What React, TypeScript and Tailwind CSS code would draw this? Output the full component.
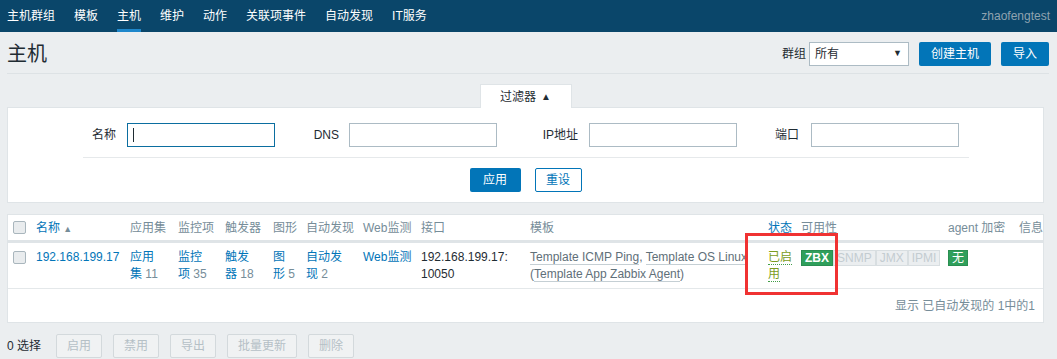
const navItems = ['主机群组', '模板', '主机', '维护', '动作', '关联项事件', '自动发现', 'IT服务'];

const cols =
  'grid grid-cols-[28px_94px_48px_47px_48px_33px_57px_58px_109px_238px_33px_147px_71px_24px]';

function Checkbox() {
  return <span className="block h-[13px] w-[13px] rounded-[2px] border border-[#a9b6bd] bg-[#e9ecee]" />;
}

export default function App() {
  return (
    <div className="relative min-h-screen bg-[#ebeef0] font-['Liberation_Sans','Noto_Sans_CJK_SC',sans-serif] text-[12px] text-[#1f2c33]">
      {/* top menu */}
      <nav className="flex h-[32px] bg-[#0a466a] pl-[7px] pr-[7px]">
        <ul className="flex gap-[19px]">
          {navItems.map((item) => (
            <li
              key={item}
              className={
                'flex items-center border-y-[3px] border-t-transparent text-white ' +
                (item === '主机' ? 'border-b-[#1e87cb]' : 'border-b-transparent')
              }
            >
              {item}
            </li>
          ))}
        </ul>
        <span className="ml-auto self-center text-[#8fa3b0]">zhaofengtest</span>
      </nav>

      {/* page header */}
      <div className="ml-[7px] mr-[8px] flex items-center justify-between border-b border-[#dde2e5] pb-[7px] pt-[10px]">
        <h1 className="text-[20px] leading-[24px] text-[#1f2c33]">主机</h1>
        <div className="flex items-center">
          <span className="mr-[3px]">群组</span>
          <div className="flex h-[24px] w-[100px] items-center border border-[#acbbc4] bg-white pl-[5px] pr-[6px]">
            <span>所有</span>
            <span className="ml-auto text-[9px]">▼</span>
          </div>
          <button className="ml-[10px] h-[24px] rounded-[2px] bg-[#0275b8] px-[12px] text-white">创建主机</button>
          <button className="ml-[10px] h-[24px] rounded-[2px] bg-[#0275b8] px-[12px] text-white">导入</button>
        </div>
      </div>

      {/* filter */}
      <div className="ml-[7px] mt-[10px] w-[1037px]">
        <div className="relative z-10 mx-auto -mb-px flex h-[24px] w-[92px] items-center justify-center border border-b-0 border-[#dfe4e7] bg-white">
          过滤器 <span className="ml-[5px] text-[10px]">▲</span>
        </div>
        <div className="border border-[#dfe4e7] bg-white pb-[10px] pt-[15px]">
          <div className="ml-[75px] flex w-[886px] items-center border-b border-[#e6e9eb] pb-[10px]">
            <span className="w-[33px] text-right">名称</span>
            <div className="ml-[11px] flex h-[24px] w-[148px] items-center border border-[#0b6ea0] pl-[5px]">
              <span className="h-[14px] w-px bg-[#1f2c33]" />
            </div>
            <span className="w-[64px] text-right">DNS</span>
            <div className="ml-[10px] h-[24px] w-[148px] border border-[#acbbc4]" />
            <span className="w-[81px] text-right">IP地址</span>
            <div className="ml-[11px] h-[24px] w-[148px] border border-[#acbbc4]" />
            <span className="w-[62px] text-right">端口</span>
            <div className="ml-[12px] h-[24px] w-[148px] border border-[#acbbc4]" />
          </div>
          <div className="flex justify-center gap-[14px] pt-[10px]">
            <button className="h-[24px] w-[51px] rounded-[2px] bg-[#0275b8] text-white">应用</button>
            <button className="h-[24px] w-[47px] rounded-[2px] border border-[#0275b8] bg-white text-[#0275b8]">重设</button>
          </div>
        </div>
      </div>

      {/* hosts table */}
      <div className="ml-[7px] mt-[11px] w-[1037px] border border-[#dfe4e7] bg-white">
        <div className={cols + ' h-[28px] items-center border-b-[3px] border-[#dfe4e7] text-[#768d99]'}>
          <div className="pl-[5px]">
            <Checkbox />
          </div>
          <div className="text-[#0275b8]">
            名称 <span className="text-[9px] text-[#768d99]">▲</span>
          </div>
          <div>应用集</div>
          <div>监控项</div>
          <div>触发器</div>
          <div>图形</div>
          <div>自动发现</div>
          <div>Web监测</div>
          <div>接口</div>
          <div>模板</div>
          <div className="text-[#0275b8]">状态</div>
          <div>可用性</div>
          <div>agent 加密</div>
          <div>信息</div>
        </div>
        <div className={cols + ' h-[46px] items-start border-b border-[#e4e8ea] pt-[6px] leading-[17px]'}>
          <div className="pl-[5px] pt-[2px]">
            <Checkbox />
          </div>
          <div className="text-[#0275b8]">192.168.199.17</div>
          <div className="text-[#0275b8]">
            应用<br />集 <span className="text-[#768d99]">11</span>
          </div>
          <div className="text-[#0275b8]">
            监控<br />项 <span className="text-[#768d99]">35</span>
          </div>
          <div className="text-[#0275b8]">
            触发<br />器 <span className="text-[#768d99]">18</span>
          </div>
          <div className="text-[#0275b8]">
            图<br />形 <span className="text-[#768d99]">5</span>
          </div>
          <div className="text-[#0275b8]">
            自动发<br />现 <span className="text-[#768d99]">2</span>
          </div>
          <div className="text-[#0275b8]">Web监测</div>
          <div>
            192.168.199.17:<br />10050
          </div>
          <div className="whitespace-nowrap text-[#5f7079]">
            <span className="border-b border-[#c5cfd4]">Template ICMP Ping</span>,{' '}
            <span className="border-b border-[#c5cfd4]">Template OS Linux</span>
            <br />(<span className="border-b border-[#c5cfd4]">Template App Zabbix Agent</span>)
          </div>
          <div className="text-[#7a9c22]">
            <span className="border-b border-dotted border-[#429e47]">已启</span>
            <br />
            <span className="border-b border-dotted border-[#429e47]">用</span>
          </div>
          <div className="flex pt-[1px] leading-[14px]">
            <span className="border border-[#2a8e51] bg-[#2f9f5b] px-[3px] font-bold text-white">ZBX</span>
            <span className="border border-[#d8dee1] bg-[#ebeef0] px-[3px] text-[#c3ccd1]">SNMP</span>
            <span className="border border-[#d8dee1] bg-[#ebeef0] px-[3px] text-[#c3ccd1]">JMX</span>
            <span className="border border-[#d8dee1] bg-[#ebeef0] px-[3px] text-[#c3ccd1]">IPMI</span>
          </div>
          <div className="flex pt-[1px] leading-[14px]">
            <span className="border border-[#2a8e51] bg-[#2f9f5b] px-[3px] text-white">无</span>
          </div>
          <div />
        </div>
        <div className="flex h-[33px] items-center justify-end pr-[8px] text-[#768d99]">显示 已自动发现的 1中的1</div>
      </div>

      {/* mass actions */}
      <div className="ml-[7px] mt-[11px] flex items-center gap-[11px]">
        <span className="mr-[4px]">0 选择</span>
        {['启用', '禁用', '导出', '批量更新', '删除'].map((b) => (
          <button
            key={b}
            className="h-[24px] rounded-[2px] border border-[#d3d9dc] bg-[#f0f2f3] px-[10px] text-[#b5c0c6]"
          >
            {b}
          </button>
        ))}
      </div>

      {/* annotation */}
      <div className="pointer-events-none absolute left-[745px] top-[233px] h-[62px] w-[93px] border-[3px] border-[#f03232]" />
    </div>
  );
}
